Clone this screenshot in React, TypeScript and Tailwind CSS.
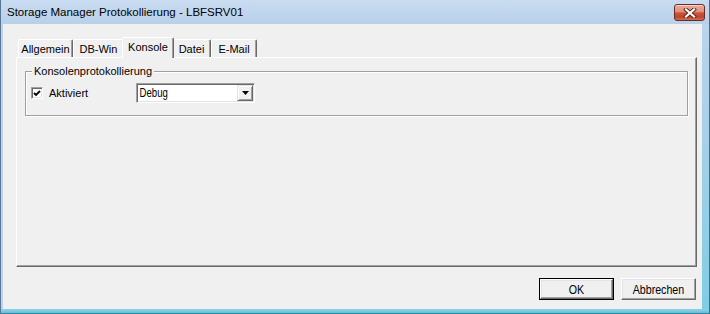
import React from "react";

function Tab({ label, w, selected }: { label: string; w: string; selected?: boolean }) {
  if (selected) {
    return (
      <div
        className={`${w} h-[21px] -mx-[2px] -mb-px relative z-10 flex items-center justify-center bg-[#f0f0f0] border-t border-l border-r border-t-white border-l-white border-r-[#696969] rounded-t-[2px] shadow-[inset_-1px_0_0_#a0a0a0] text-[11px] leading-[13px] pb-[1px]`}
      >
        {label}
      </div>
    );
  }
  return (
    <div
      className={`${w} h-[18px] flex items-center justify-center border-t border-l border-r border-t-white border-l-white border-r-[#696969] rounded-t-[2px] shadow-[inset_-1px_0_0_#a0a0a0] text-[11px] leading-[13px] pt-[1px]`}
    >
      {label}
    </div>
  );
}

function Button({ label, isDefault }: { label: string; isDefault?: boolean }) {
  const inner = (
    <div className="flex-1 flex items-center justify-center bg-[#f0f0f0] border border-t-white border-l-white border-r-[#696969] border-b-[#696969] shadow-[inset_-1px_-1px_0_#a0a0a0,inset_1px_1px_0_#e3e3e3]">
      <span className="inline-block text-[13px] leading-[15px] scale-x-[0.82]">{label}</span>
    </div>
  );
  if (isDefault) {
    return <div className="w-[75px] h-[22px] flex border border-black">{inner}</div>;
  }
  return <div className="w-[75px] h-[22px] flex">{inner}</div>;
}

export default function App() {
  return (
    <div className="w-[710px] h-[314px] flex flex-col overflow-hidden text-black [font-family:'Liberation_Sans',Arial,sans-serif]">
      {/* Title bar */}
      <div className="h-[24px] flex items-start justify-between bg-gradient-to-b from-[#c9dcf0] to-[#b8d0ea] border-l border-r border-l-[#5a7693] border-r-[#4c6a88]">
        <span className="pl-[6px] pt-[5px] text-[11.5px] leading-[14px] whitespace-nowrap">
          Storage Manager Protokollierung - LBFSRV01
        </span>
        <div className="mt-[4px] mr-[4px] w-[31px] h-[17px] rounded-[3px] border border-[#6b2c22] bg-[linear-gradient(to_bottom,#eaaa9c_0%,#dd917e_45%,#ca573c_52%,#c0442b_80%,#d27050_100%)] shadow-[inset_0_1px_0_rgba(255,255,255,0.5)] flex items-center justify-center">
          <svg width="14" height="10" viewBox="0 0 14 10">
            <path d="M3 1.5 L11 8.5 M11 1.5 L3 8.5" stroke="#5a2218" strokeWidth="4" strokeLinecap="square" fill="none" />
            <path d="M3 1.5 L11 8.5 M11 1.5 L3 8.5" stroke="#ffffff" strokeWidth="2.2" strokeLinecap="square" fill="none" />
          </svg>
        </div>
      </div>

      {/* Middle */}
      <div className="flex flex-1">
        <div className="w-[3px] bg-[#bcd3ec] border-l border-[#5a7693]" />
        <div className="w-[699px] bg-[#f0f0f0] flex flex-col pt-[13px] pl-[13px] pr-[5px]">
          {/* Tab strip */}
          <div className="h-[20px] flex items-end pl-[2px]">
            <Tab label="Allgemein" w="w-[55px]" />
            <Tab label="DB-Win" w="w-[51px]" />
            <Tab label="Konsole" w="w-[52px]" selected />
            <Tab label="Datei" w="w-[39px]" />
            <Tab label="E-Mail" w="w-[46px]" />
          </div>

          {/* Tab panel */}
          <div className="h-[210px] border border-t-white border-l-white border-r-[#696969] border-b-[#696969] shadow-[inset_-1px_-1px_0_#a0a0a0] pt-[13px] px-[8px]">
            {/* Group box */}
            <div className="relative h-[45px] border border-[#a0a0a0] shadow-[inset_1px_1px_0_#fff,1px_1px_0_#fff]">
              <span className="absolute left-[6px] top-[-7px] px-[2px] bg-[#f0f0f0] text-[11px] leading-[13px] whitespace-nowrap">
                Konsolenprotokollierung
              </span>
              <div className="flex items-center pt-[11px] pl-[5px]">
                <div className="w-[105px] flex items-center">
                  <div className="w-[12px] h-[12px] border border-t-[#a0a0a0] border-l-[#a0a0a0] border-r-white border-b-white bg-white shadow-[inset_1px_1px_0_#696969,inset_-1px_-1px_0_#e3e3e3] flex items-center justify-center">
                    <svg width="8" height="7" viewBox="0 0 8 7">
                      <path d="M1 3 L3 5 L7 1" stroke="#000" strokeWidth="1.8" fill="none" />
                    </svg>
                  </div>
                  <span className="ml-[6px] text-[11px] leading-[13px]">Aktiviert</span>
                </div>
                <div className="w-[119px] h-[20px] flex items-center border border-t-[#a0a0a0] border-l-[#a0a0a0] border-r-white border-b-white bg-white shadow-[inset_1px_1px_0_#696969,inset_-1px_-1px_0_#e3e3e3] p-px">
                  <span className="flex-1 pl-[2px] inline-block origin-left scale-x-[0.8] text-[12px] leading-[14px] whitespace-nowrap">
                    Debug
                  </span>
                  <div className="w-[16px] h-[16px] flex items-center justify-center bg-[#f0f0f0] border border-t-[#e3e3e3] border-l-[#e3e3e3] border-r-[#696969] border-b-[#696969] shadow-[inset_1px_1px_0_#fff,inset_-1px_-1px_0_#a0a0a0]">
                    <svg width="7" height="4" viewBox="0 0 7 4">
                      <path d="M0 0 H7 L3.5 4 Z" fill="#000" />
                    </svg>
                  </div>
                </div>
              </div>
            </div>
          </div>

          {/* Buttons */}
          <div className="mt-[11px] flex justify-end gap-[7px] pr-[1px]">
            <Button label="OK" isDefault />
            <Button label="Abbrechen" />
          </div>
        </div>
        <div className="w-[8px] bg-gradient-to-b from-[#bcd3ec] to-[#7fcde5] border-r border-[#4c6a88]" />
      </div>

      {/* Bottom frame */}
      <div className="h-[5px] bg-gradient-to-b from-[#8fd3ea] to-[#5ec3df] border-l border-r border-b border-l-[#5a7693] border-r-[#4c6a88] border-b-[#3f7f99]" />
    </div>
  );
}
